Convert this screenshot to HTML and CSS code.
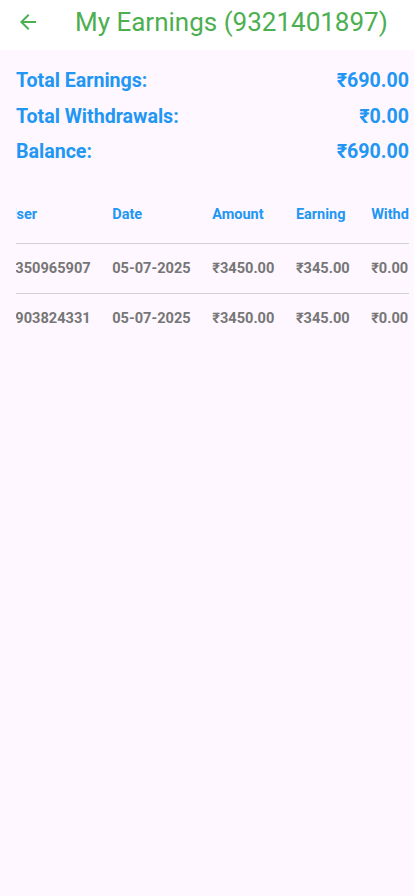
FILE: index.html
```html
<!DOCTYPE html>
<html>
<head>
<meta charset="utf-8">
<link rel="stylesheet" href="styles.css">
</head>
<body>
<header class="appbar">
  <svg class="back" width="24" height="24" viewBox="0 0 24 24"><path d="M20 11H7.83l5.59-5.59L12 4l-8 8 8 8 1.41-1.41L7.83 13H20v-2z" fill="#4caf50"/></svg>
  <h1 class="title">My Earnings (9321401897)</h1>
</header>
<main class="content">
  <section class="summary">
    <div class="sum-row"><span>Total Earnings:</span><span>₹690.00</span></div>
    <div class="sum-row"><span>Total Withdrawals:</span><span>₹0.00</span></div>
    <div class="sum-row"><span>Balance:</span><span>₹690.00</span></div>
  </section>
  <div class="table-wrap">
    <table class="data">
      <thead>
        <tr><th>User</th><th>Date</th><th>Amount</th><th>Earning</th><th>Withdrawal</th></tr>
      </thead>
      <tbody>
        <tr><td>9350965907</td><td>05-07-2025</td><td>₹3450.00</td><td>₹345.00</td><td>₹0.00</td></tr>
        <tr><td>9903824331</td><td>05-07-2025</td><td>₹3450.00</td><td>₹345.00</td><td>₹0.00</td></tr>
      </tbody>
    </table>
  </div>
</main>
</body>
</html>
```
FILE: styles.css
```css
html, body {
  margin: 0;
  padding: 0;
  background: #fef7ff;
  font-family: Roboto, "Noto Sans", sans-serif;
  height: 100%;
}
.appbar {
  height: 50px;
  background: #ffffff;
  display: flex;
  align-items: center;
  padding-left: 16px;
  box-sizing: border-box;
}
.back {
  display: block;
  margin-top: -7px;
}
.title {
  margin: -7px 0 0 35px;
  font-size: 26px;
  font-weight: 400;
  color: #4caf50;
  white-space: nowrap;
}
.content {
  padding: 13px 5px 0 16px;
}
.summary {
  display: flex;
  flex-direction: column;
}
.sum-row {
  display: flex;
  justify-content: space-between;
  height: 35.5px;
  align-items: center;
  font-size: 19.6px;
  font-weight: 700;
  color: #2196f3;
}
.table-wrap {
  margin-top: 17px;
  overflow: hidden;
}
.data {
  border-collapse: collapse;
  margin-left: -9px;
  white-space: nowrap;
}
.data th {
  height: 56px;
  padding: 0 21.5px 0 0;
  text-align: left;
  color: #2196f3;
  font-size: 14.5px;
  font-weight: 700;
  border-bottom: 1px solid #d3d0d5;
}
.data td {
  height: 49px;
  padding: 0 21.5px 0 0;
  color: #767676;
  font-size: 14.6px;
  font-weight: 700;
  border-bottom: 1px solid #d3d0d5;
}
.data tbody tr:last-child td {
  border-bottom: none;
}
```
